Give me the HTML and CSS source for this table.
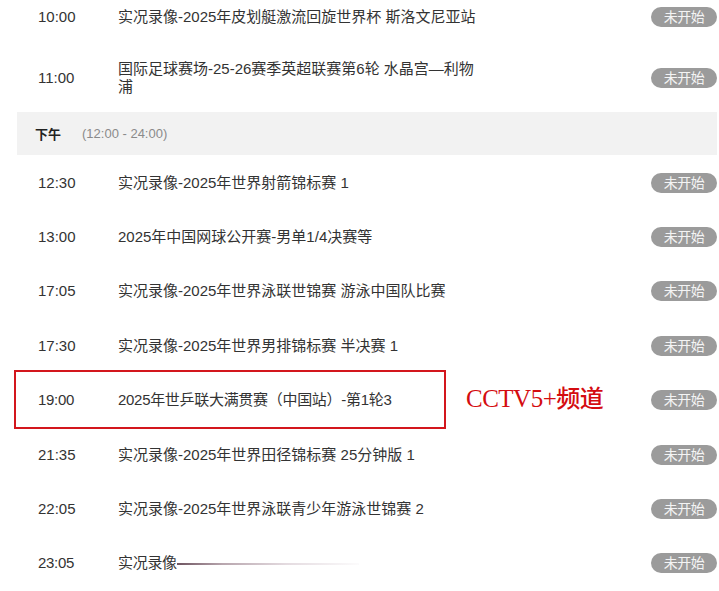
FILE: index.html
```html
<!DOCTYPE html>
<html lang="zh-CN">
<head>
<meta charset="utf-8">
<title>节目单</title>
<link rel="stylesheet" href="styles.css">
</head>
<body>
<div class="schedule">
  <div class="row">
    <span class="time">10:00</span>
    <span class="title">实况录像-2025年皮划艇激流回旋世界杯 斯洛文尼亚站</span>
    <span class="badge">未开始</span>
  </div>
  <div class="row row-tall">
    <span class="time">11:00</span>
    <span class="title">国际足球赛场-25-26赛季英超联赛第6轮 水晶宫—利物浦</span>
    <span class="badge">未开始</span>
  </div>
  <div class="period">
    <span class="period-name">下午</span>
    <span class="period-range">(12:00 - 24:00)</span>
  </div>
  <div class="row">
    <span class="time">12:30</span>
    <span class="title">实况录像-2025年世界射箭锦标赛 1</span>
    <span class="badge">未开始</span>
  </div>
  <div class="row">
    <span class="time">13:00</span>
    <span class="title">2025年中国网球公开赛-男单1/4决赛等</span>
    <span class="badge">未开始</span>
  </div>
  <div class="row">
    <span class="time">17:05</span>
    <span class="title">实况录像-2025年世界泳联世锦赛 游泳中国队比赛</span>
    <span class="badge">未开始</span>
  </div>
  <div class="row">
    <span class="time">17:30</span>
    <span class="title">实况录像-2025年世界男排锦标赛 半决赛 1</span>
    <span class="badge">未开始</span>
  </div>
  <div class="row row-marked">
    <span class="time narrow">19:00</span>
    <span class="title narrow">2025年世乒联大满贯赛（中国站）-第1轮3</span>
    <span class="badge">未开始</span>
    <span class="mark-box"></span>
    <span class="mark-label">CCTV5+<span class="mark-cjk">频道</span></span>
  </div>
  <div class="row">
    <span class="time">21:35</span>
    <span class="title">实况录像-2025年世界田径锦标赛 25分钟版 1</span>
    <span class="badge">未开始</span>
  </div>
  <div class="row">
    <span class="time">22:05</span>
    <span class="title">实况录像-2025年世界泳联青少年游泳世锦赛 2</span>
    <span class="badge">未开始</span>
  </div>
  <div class="row">
    <span class="time narrow">23:05</span>
    <span class="title narrow">实况录像<span class="blur-line"></span></span>
    <span class="badge">未开始</span>
  </div>
</div>
</body>
</html>
```

FILE: styles.css
```css
* { box-sizing: border-box; }

html, body {
  margin: 0;
  padding: 0;
  background: #ffffff;
  overflow: hidden;
}

body {
  font-family: "Liberation Sans", "Noto Sans CJK SC", Arial, sans-serif;
  color: #333333;
  font-size: 15px;
}

.schedule {
  margin-top: -10px;
  padding-left: 17px;
  width: 717px;
}

.row {
  position: relative;
  display: flex;
  align-items: center;
  min-height: 54.4px;
  padding: 16px 0;
}

.row-tall {
  min-height: 68px;
}

.time {
  flex: 0 0 auto;
  width: 101px;
  padding-left: 21px;
  font-size: 15px;
  line-height: 18px;
  color: #333333;
}

.title {
  flex: 0 0 auto;
  width: 364px;
  font-size: 15px;
  line-height: 18px;
  color: #333333;
}

.narrow {
  letter-spacing: -0.3px;
}

.badge {
  margin-left: auto;
  width: 66px;
  height: 20px;
  border-radius: 10px;
  background: #9b9b9b;
  color: #f4f4f4;
  font-size: 14px;
  line-height: 20px;
  text-align: center;
  letter-spacing: -0.5px;
}

.period {
  display: flex;
  align-items: center;
  height: 43px;
  background: #f2f2f2;
  padding-left: 18px;
  font-size: 13px;
}

.period-name {
  font-weight: bold;
  color: #222222;
  width: 47px;
}

.period-range {
  color: #8a8a8a;
}

.mark-box {
  position: absolute;
  left: -3px;
  top: -3px;
  width: 432px;
  height: 59px;
  border: 2px solid #d3161d;
}

.mark-label {
  position: absolute;
  left: 449px;
  top: 9px;
  font-family: "Liberation Serif", "Noto Sans CJK SC", serif;
  font-size: 25px;
  line-height: 30px;
  color: #d40c10;
  letter-spacing: -0.5px;
}

.mark-cjk {
  font-family: "Noto Sans CJK SC", serif;
  font-weight: 500;
  font-size: 24px;
}

.blur-line {
  display: inline-block;
  vertical-align: middle;
  width: 182px;
  height: 2px;
  background: linear-gradient(90deg, #6e5460 0%, #b8a6ae 25%, #e4dbe0 60%, rgba(245,242,244,0.3) 100%);
}
```
